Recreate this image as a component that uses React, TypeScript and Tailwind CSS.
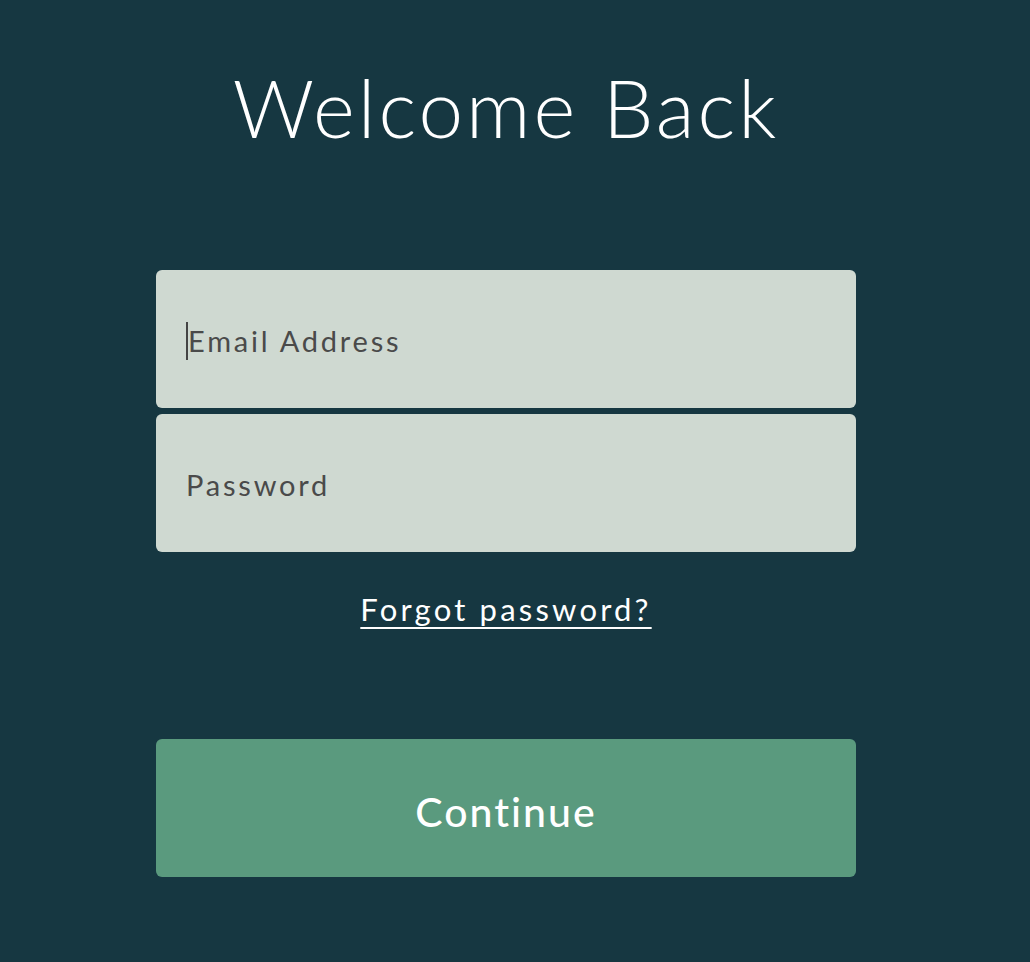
import React from "react";

export default function App() {
  return (
    <div className="min-h-[962px] w-full bg-[#163741] flex flex-col items-center pr-[18px]" style={{ fontFamily: "Lato, 'Noto Sans', sans-serif" }}>
      <h1 className="mt-[62px] h-[90px] text-[80px] leading-[90px] font-light text-white tracking-[3px]">Welcome Back</h1>
      <div className="mt-[118px] w-[700px] flex flex-col gap-[6px]">
        <div className="h-[138px] rounded-[6px] bg-[#cfd9d1] flex items-center pl-[30px] pt-[3px]">
          <span className="w-[2px] h-[38px] bg-[#444]"></span>
          <span className="text-[29px] text-[#4a4a4a] tracking-[2.8px]">Email Address</span>
        </div>
        <div className="h-[138px] rounded-[6px] bg-[#cfd9d1] flex items-center pl-[30px] pt-[3px]">
          <span className="text-[29px] text-[#4a4a4a] tracking-[2.8px]">Password</span>
        </div>
      </div>
      <a className="mt-[37px] text-[31px] leading-[40px] text-white underline underline-offset-[6px] decoration-[2px] tracking-[3.2px]">Forgot password?</a>
      <button className="mt-[110px] w-[700px] h-[138px] rounded-[6px] bg-[#5a9a7e] text-white text-[41px] font-medium tracking-[2px] pt-[8px]">Continue</button>
    </div>
  );
}
